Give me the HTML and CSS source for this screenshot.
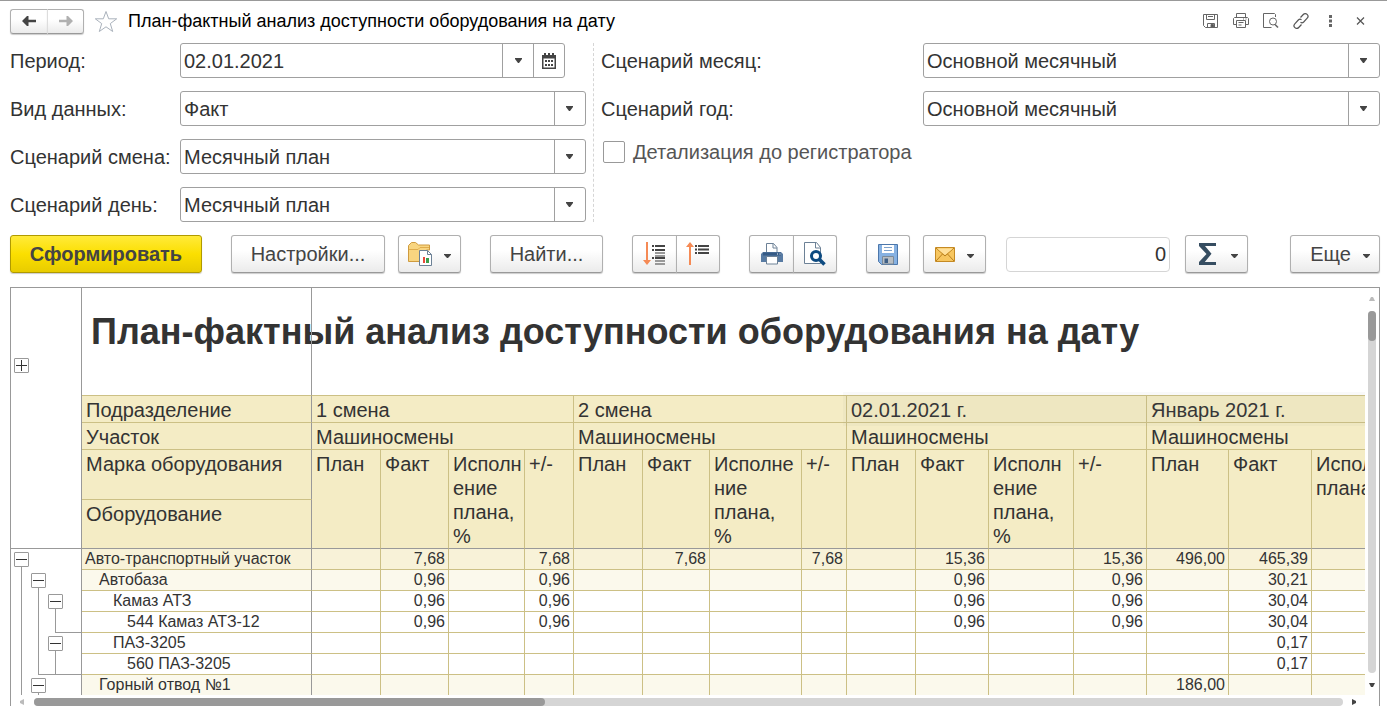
FILE: index.html
```html
<!DOCTYPE html>
<html lang="ru">
<head>
<meta charset="utf-8">
<title>План-фактный анализ доступности оборудования на дату</title>
<link rel="stylesheet" href="styles.css">
</head>
<body>
<svg class="defs" aria-hidden="true">
  <symbol id="caret" viewBox="0 0 7 5" preserveAspectRatio="none"><path d="M0 0h7v1L4 5H3L0 1z" fill="currentColor"/></symbol>
  <symbol id="up" viewBox="0 0 6 4"><path d="M0 4l2-4h2l2 4z" fill="currentColor"/></symbol>
</svg>

<header class="titlebar">
  <div class="group nav">
    <button class="btn" aria-label="Назад"><svg width="14" height="10" viewBox="0 0 14 10"><path d="M0 5l5-5h1.500v3.700H14v2.600H6.500V10H5z" fill="#444"/></svg></button>
    <button class="btn" aria-label="Вперед"><svg width="14" height="10" viewBox="0 0 14 10"><path d="M14 5L9 0H7.500v3.700H0v2.600h7.500V10H9z" fill="#b0b0b0"/></svg></button>
  </div>
  <button class="plain star" aria-label="В избранное"><svg width="24" height="23" viewBox="0 0 24 23"><path d="M12 1.500l2.700 7.300h8l-6.400 4.800 2.400 7.900L12 16.800l-6.700 4.700 2.400-7.900L1.300 8.800h8z" fill="none" stroke="#aab2bc"/></svg></button>
  <h1 class="window-title">План-фактный анализ доступности оборудования на дату</h1>
  <div class="tools">
    <button class="plain" aria-label="Сохранить"><svg width="16" height="16" viewBox="0 0 16 16" fill="none" stroke="#666"><path d="M.5 1.500h14v13H2.500l-2-2zM3.500 1.500v5h8v-5M5 3.500h5M4.500 14v-3.500h7V14"/><path d="M8 11.500h2.500v2.500H8z" fill="#555"/></svg></button>
    <button class="plain" aria-label="Печать"><svg width="16" height="16" viewBox="0 0 16 16" fill="none" stroke="#666"><path d="M3.500 4.500v-4h9v4M3.500 11.500h-3v-6l1-1h13l1 1v6h-3M3.500 7.500h9v7h-9zM5.500 9.500h5M5.500 12h3M10 6h1M12.500 6h1"/></svg></button>
    <button class="plain" aria-label="Просмотр"><svg width="16" height="16" viewBox="0 0 16 16" fill="none" stroke="#666"><path d="M12.500 4V1.500l-1-1H.5v14h8"/><circle cx="10" cy="8.500" r="3.500"/><path d="M12 11.500l3 3" stroke-width="1.600"/></svg></button>
    <button class="plain" aria-label="Ссылка"><svg width="16" height="16" viewBox="0 0 16 16" fill="none" stroke="#555" stroke-width="1.200"><path d="M7.500 4.500l2.800-3a2.600 2.600 0 0 1 3.900 3.700l-3.500 3.800a2.600 2.600 0 0 1-3.200.3M8.500 11.500l-2.800 3a2.600 2.600 0 0 1-3.900-3.700L5.300 7a2.600 2.600 0 0 1 3.200-.3"/></svg></button>
    <button class="plain" aria-label="Меню"><svg width="16" height="16" viewBox="0 0 16 16" fill="#666"><path d="M6 2h3v3H6zM6 6.500h3v3H6zM6 11h3v3H6z"/></svg></button>
    <button class="plain" aria-label="Закрыть"><svg width="16" height="16" viewBox="0 0 16 16"><path d="M4 4.500l7 7M11 4.500l-7 7" stroke="#555" stroke-width="1.200"/></svg></button>
  </div>
</header>

<form class="params">
  <div class="params-left">
    <label for="period">Период:</label>
    <div class="combo date">
      <input id="period" type="text" value="02.01.2021">
      <button type="button" aria-label="Выбрать"><svg class="caret"><use href="#caret"/></svg></button>
      <button type="button" aria-label="Календарь"><svg width="14" height="16" viewBox="0 0 14 16"><path d="M0 2h2V0h2v2h2V0h2v2h2V0h2v2h2v14H0z" fill="#444"/><path d="M1.500 5.500h11v9h-11z" fill="#fff"/><path d="M3 7h2v2H3zM6 7h2v2H6zM9 7h2v2H9zM3 11h2v2H3zM6 11h2v2H6zM9 11h2v2H9z" fill="#444"/></svg></button>
    </div>
    <label for="kind">Вид данных:</label>
    <div class="combo"><select id="kind"><option>Факт</option></select><svg class="caret"><use href="#caret"/></svg></div>
    <label for="shift">Сценарий смена:</label>
    <div class="combo"><select id="shift"><option>Месячный план</option></select><svg class="caret"><use href="#caret"/></svg></div>
    <label for="day">Сценарий день:</label>
    <div class="combo"><select id="day"><option>Месячный план</option></select><svg class="caret"><use href="#caret"/></svg></div>
  </div>
  <div class="params-right">
    <label for="month">Сценарий месяц:</label>
    <div class="combo"><select id="month"><option>Основной месячный</option></select><svg class="caret"><use href="#caret"/></svg></div>
    <label for="year">Сценарий год:</label>
    <div class="combo"><select id="year"><option>Основной месячный</option></select><svg class="caret"><use href="#caret"/></svg></div>
    <label class="check"><input type="checkbox">Детализация до регистратора</label>
  </div>
</form>

<div class="toolbar">
  <button class="btn primary">Сформировать</button>
  <button class="btn wide">Настройки...</button>
  <button class="btn menu near" aria-label="Варианты отчета"><svg width="24" height="24" viewBox="0 0 24 24"><path d="M.5 19.500V3.500l3-3h4l3 2.500h11v5h-3v11.500z" fill="#f8d580" stroke="#cf9b3f"/><path d="M1 7.500h9l2-2h9" fill="none" stroke="#e0ac4c"/><path d="M11.500 8.500h8l4 4v11h-12z" fill="#fff" stroke="#6c8196"/><path d="M19.500 8.500v4h4" fill="none" stroke="#6c8196"/><path d="M15 15h2v6h-2z" fill="#e8483a"/><path d="M18 16h3v5h-3z" fill="#3f9d4a"/></svg><svg class="caret"><use href="#caret"/></svg></button>
  <button class="btn find">Найти...</button>
  <div class="group">
    <button class="btn" aria-label="Развернуть"><svg width="24" height="24" viewBox="0 0 24 24"><path d="M3 0h2v18h3l-4 5-4-5h3z" fill="#f58a55"/><path d="M9 4h2M12 4h10M9 8h2M12 8h10M9 16h2M12 16h10" stroke="#444" stroke-width="2"/><path d="M12 11h10M12 14h10M12 19h10M12 22h10" stroke="#999" stroke-width="2"/></svg></button>
    <button class="btn" aria-label="Свернуть"><svg width="24" height="24" viewBox="0 0 24 24"><path d="M3 23h2V5h3L4 0 0 5h3z" fill="#f58a55"/><path d="M9 4h2M12 4h11M9 7.500h2M12 7.500h11M9 11h2M12 11h11" stroke="#444" stroke-width="2"/></svg></button>
  </div>
  <div class="group">
    <button class="btn" aria-label="Печать"><svg width="22" height="22" viewBox="0 0 22 22"><path d="M5.500 10V.5h7l3.500 4V10" fill="#fff" stroke="#6c8196"/><path d="M12 .5V5h4" fill="none" stroke="#6c8196"/><path d="M0 11l2-2h18l2 2v8H0z" fill="#587ba3"/><path d="M2 9.500h18v3H2z" fill="#355a85"/><path d="M16 11h1M18.500 11h1" stroke="#fff"/><path d="M5.500 13.500h11v7.500h-11z" fill="#fff" stroke="#6c8196"/></svg></button>
    <button class="btn" aria-label="Предварительный просмотр"><svg width="22" height="24" viewBox="0 0 22 24"><path d="M.5.500h12l4 5v16H.5z" fill="#fff" stroke="#6c8196"/><path d="M11.500.500V6h5" fill="none" stroke="#6c8196"/><circle cx="12" cy="14" r="4.500" fill="#fff" stroke="#0d4a80" stroke-width="3"/><path d="M15.500 17.500l5 5" stroke="#0d4a80" stroke-width="3.500"/></svg></button>
  </div>
  <button class="btn icon" aria-label="Сохранить"><svg width="20" height="21" viewBox="0 0 20 21"><path d="M.5.500h19v20h-16l-3-3z" fill="#86b1e2" stroke="#4c77ab"/><path d="M4 1h12v8H4z" fill="#fff"/><path d="M6 3.500h8M6 6.500h8" stroke="#7ea2cc"/><path d="M4.500 20v-7.500h11V20z" fill="#b8bec4" stroke="#7b8a99"/><path d="M6.500 14.500h3.500V19H6.500z" fill="#3e5f86"/></svg></button>
  <button class="btn menu near" aria-label="Отправить"><svg width="20" height="15" viewBox="0 0 20 15"><path d="M.5.500h19v14H.5z" fill="#f7c65f" stroke="#c58a24"/><path d="M1 1l9 8 9-8M1 14l6.500-7M19 14l-6.500-7" fill="none" stroke="#b97e1c"/><path d="M2 1.500h16L10 8z" fill="#ffe09a"/></svg><svg class="caret"><use href="#caret"/></svg></button>
  <input class="sum" type="text" value="0" aria-label="Сумма">
  <button class="btn menu sigma" aria-label="Вид итога"><svg width="18" height="22" viewBox="0 0 18 22"><path d="M0 0h17v3H6l6.500 7.800L5.800 19H17v3H0v-3l7.500-8L0 3z" fill="#364d61"/></svg><svg class="caret"><use href="#caret"/></svg></button>
  <button class="btn more">Еще<svg class="caret"><use href="#caret"/></svg></button>
</div>

<main class="report">
  <div class="sheet">
    <table>
      <colgroup>
        <col class="c-tree"><col class="c-name">
        <col class="w69"><col class="w68"><col class="w76"><col class="w49">
        <col class="w69"><col class="w67"><col class="w92"><col class="w45">
        <col class="w69"><col class="w73"><col class="w85"><col class="w73">
        <col class="w82"><col class="w83"><col>
      </colgroup>
      <thead>
        <tr class="r-title"><td class="tree corner" rowspan="5"><button class="box plus" aria-label="Развернуть"></button></td><td class="name"><h2>План-фактный анализ доступности оборудования на дату</h2></td><td colspan="15"></td></tr>
        <tr class="r-group"><th class="name">Подразделение</th><th colspan="4">1 смена</th><th colspan="4">2 смена</th><th colspan="4" class="shade">02.01.2021 г.</th><th colspan="3">Январь 2021 г.</th></tr>
        <tr class="r-group"><th class="name">Участок</th><th colspan="4">Машиносмены</th><th colspan="4">Машиносмены</th><th colspan="4">Машиносмены</th><th colspan="3">Машиносмены</th></tr>
        <tr class="r-brand"><th class="name">Марка оборудования</th>
          <th rowspan="2">План</th><th rowspan="2">Факт</th><th rowspan="2">Исполн<br>ение<br>плана,<br>%</th><th rowspan="2">+/-</th>
          <th rowspan="2">План</th><th rowspan="2">Факт</th><th rowspan="2">Исполне<br>ние<br>плана,<br>%</th><th rowspan="2">+/-</th>
          <th rowspan="2">План</th><th rowspan="2">Факт</th><th rowspan="2">Исполн<br>ение<br>плана,<br>%</th><th rowspan="2">+/-</th>
          <th rowspan="2">План</th><th rowspan="2">Факт</th><th rowspan="2">Исполнение<br>плана, %</th></tr>
        <tr class="r-unit"><th class="name">Оборудование</th></tr>
      </thead>
      <tbody>
        <tr class="lvl1"><td class="tree"><div><i class="from"><button class="box" aria-label="Свернуть"></button></i></div></td><td class="name">Авто-транспортный участок</td><td></td><td>7,68</td><td></td><td>7,68</td><td></td><td>7,68</td><td></td><td>7,68</td><td></td><td>15,36</td><td></td><td>15,36</td><td>496,00</td><td>465,39</td><td></td></tr>
        <tr class="lvl2"><td class="tree"><div><i class="line"></i><i class="from"><button class="box" aria-label="Свернуть"></button></i></div></td><td class="name">Автобаза</td><td></td><td>0,96</td><td></td><td>0,96</td><td></td><td></td><td></td><td></td><td></td><td>0,96</td><td></td><td>0,96</td><td></td><td>30,21</td><td></td></tr>
        <tr class="lvl3"><td class="tree"><div><i class="line"></i><i class="line"></i><i class="from"><button class="box" aria-label="Свернуть"></button></i></div></td><td class="name">Камаз АТЗ</td><td></td><td>0,96</td><td></td><td>0,96</td><td></td><td></td><td></td><td></td><td></td><td>0,96</td><td></td><td>0,96</td><td></td><td>30,04</td><td></td></tr>
        <tr class="lvl4"><td class="tree"><div><i class="line"></i><i class="line"></i><i class="end last"></i></div></td><td class="name">544 Камаз АТЗ-12</td><td></td><td>0,96</td><td></td><td>0,96</td><td></td><td></td><td></td><td></td><td></td><td>0,96</td><td></td><td>0,96</td><td></td><td>30,04</td><td></td></tr>
        <tr class="lvl3"><td class="tree"><div><i class="line"></i><i class="line"></i><i class="from"><button class="box" aria-label="Свернуть"></button></i></div></td><td class="name">ПАЗ-3205</td><td></td><td></td><td></td><td></td><td></td><td></td><td></td><td></td><td></td><td></td><td></td><td></td><td></td><td>0,17</td><td></td></tr>
        <tr class="lvl4"><td class="tree"><div><i class="line"></i><i class="end"></i><i class="end through last"></i></div></td><td class="name">560 ПАЗ-3205</td><td></td><td></td><td></td><td></td><td></td><td></td><td></td><td></td><td></td><td></td><td></td><td></td><td></td><td>0,17</td><td></td></tr>
        <tr class="lvl2"><td class="tree"><div><i class="line"></i><i class="from"><button class="box" aria-label="Свернуть"></button></i></div></td><td class="name">Горный отвод №1</td><td></td><td></td><td></td><td></td><td></td><td></td><td></td><td></td><td></td><td></td><td></td><td></td><td>186,00</td><td></td><td></td></tr>
      </tbody>
    </table>
  </div>
  <div class="vscroll"><svg class="arr dim"><use href="#up"/></svg><div class="track"><div class="thumb"></div></div><svg class="arr flip"><use href="#up"/></svg></div>
  <div class="hscroll"><svg class="arr left dim"><use href="#up"/></svg><div class="track"><div class="thumb"></div></div><svg class="arr right"><use href="#up"/></svg></div>
</main>
</body>
</html>
```
FILE: styles.css
```css
* { box-sizing: border-box; }

body {
  margin: 0;
  height: 100vh;
  display: flex;
  flex-direction: column;
  overflow: hidden;
  border-top: 1px solid #999;
  background: #fff;
  color: #333;
  font: 20px/24px "Liberation Sans", Arial, sans-serif;
}

button, input, select { font: inherit; color: inherit; }
.defs { position: absolute; width: 0; height: 0; }
.caret { width: 7px; height: 5px; color: #444; }

/* Title bar */
.titlebar {
  flex: none;
  display: flex;
  align-items: center;
  height: 42px;
  padding: 0 18px 2px 10px;
}
.plain {
  display: flex;
  padding: 0;
  border: 0;
  background: none;
}
.star { margin: 0 10px; }
.window-title {
  flex: 1;
  margin: 0;
  color: #000;
  font-size: 18px;
  font-weight: 400;
  line-height: 24px;
}
.tools { display: flex; gap: 14px; }

/* Buttons */
.btn {
  display: flex;
  align-items: center;
  justify-content: center;
  height: 38px;
  padding: 0;
  border: 1px solid #b0b0b0;
  border-bottom-color: #999;
  border-radius: 3px;
  background: linear-gradient(#fff 40%, #ebebeb);
  box-shadow: 0 1px 1px #ccc;
  color: #444;
}
.group { display: flex; }
.group .btn { width: 44px; }
.group .btn:first-child { width: 45px; border-radius: 3px 0 0 3px; }
.group .btn:last-child { margin-left: -1px; border-radius: 0 3px 3px 0; }
.nav .btn { width: 37px; height: 25px; }
.nav .btn:first-child { width: 38px; border-right-color: #ddd; }
.nav .btn:last-child { border-left-color: #ddd; }

/* Report parameters */
.params {
  flex: none;
  display: grid;
  grid-template-columns: 584fr 786fr;
  padding: 0 7px 0 10px;
}
.params-left, .params-right {
  display: grid;
  align-content: start;
  align-items: center;
  row-gap: 13px;
}
.params-left {
  grid-template-columns: 170px 1fr;
  padding-right: 7px;
  border-right: 1px dashed #d5d5d5;
}
.params-right {
  grid-template-columns: 322px 1fr;
  padding-left: 7px;
}
.combo {
  display: grid;
  grid-template-columns: 1fr 31px;
  align-items: center;
  height: 35px;
  border: 1px solid #a0a0a0;
  border-radius: 3px;
}
.combo select {
  grid-area: 1 / 1 / 2 / 3;
  height: 33px;
  padding: 0 3px;
  border: 0;
  background: linear-gradient(#a0a0a0, #a0a0a0) right 30px top / 1px 100% no-repeat;
  appearance: none;
}
.combo > .caret {
  grid-area: 1 / 2;
  justify-self: center;
  pointer-events: none;
}
.combo.date {
  grid-template-columns: 1fr 31px 31px;
  margin-right: 21px;
}
.combo input {
  min-width: 0;
  padding: 0 3px;
  border: 0;
  background: none;
}
.combo button {
  display: flex;
  align-items: center;
  justify-content: center;
  height: 33px;
  padding: 0;
  border: 0;
  border-left: 1px solid #a0a0a0;
  background: none;
}
.check {
  grid-column: 1 / 3;
  display: flex;
  align-items: center;
  gap: 8px;
  color: #555;
}
.check input {
  width: 22px;
  height: 22px;
  margin: 2px 0 2px 2px;
  border: 1px solid #999;
  border-radius: 2px;
  appearance: none;
}

/* Toolbar */
.toolbar {
  flex: none;
  display: flex;
  align-items: center;
  gap: 29px;
  padding: 13px 7px 14px 10px;
}
.primary {
  width: 192px;
  border-color: #b09a00;
  background: linear-gradient(#ffea3a, #fbdf00 50%, #e8cc00);
  font-weight: 700;
}
.wide { width: 154px; }
.find { width: 113px; }
.icon { width: 44px; }
.menu { width: 63px; gap: 12px; }
.near { margin-left: -16px; }
.toolbar .caret { height: 4px; margin-top: 3px; }
.sum {
  width: 164px;
  height: 35px;
  margin-left: -9px;
  padding: 0 3px;
  border: 1px solid #d5d5d5;
  border-radius: 4px;
  text-align: right;
}
.sigma { margin-left: -14px; padding-left: 3px; gap: 14px; }
.more { width: 90px; margin-left: auto; padding-left: 10px; gap: 12px; }

/* Report sheet */
.report {
  flex: 1;
  min-height: 0;
  display: grid;
  grid-template: minmax(0, 1fr) 11px / minmax(0, 1fr) 14px;
  margin: 0 7px 0 10px;
  border: 1px solid #999;
  border-bottom: 0;
}
.sheet { overflow: hidden; isolation: isolate; }
table {
  width: 100%;
  table-layout: fixed;
  border-spacing: 0;
}
.c-tree { width: 71px; }
.c-name { width: 230px; }
.w45 { width: 45px; }
.w49 { width: 49px; }
.w67 { width: 67px; }
.w68 { width: 68px; }
.w69 { width: 69px; }
.w73 { width: 73px; }
.w76 { width: 76px; }
.w82 { width: 82px; }
.w83 { width: 83px; }
.w85 { width: 85px; }
.w92 { width: 92px; }
th, td {
  padding: 0 3px;
  border: 0 solid #ccc085;
  border-width: 0 1px 1px 0;
  white-space: nowrap;
}
th {
  padding: 2px 0 0 4px;
  background: #f4ecc5;
  font-weight: 400;
  line-height: 24px;
  text-align: left;
  vertical-align: top;
}
.name, .tree { border-right-color: #999; }
.r-title { height: 108px; }
.r-title td { vertical-align: top; }
tr > :last-child:not(.name) { border-right-width: 0; }
.r-title .name { padding: 21px 0 0 9px; }
h2 {
  position: relative;
  z-index: -1;
  width: 0;
  margin: 0;
  font-size: 36px;
  line-height: 46px;
}
.r-group { height: 27px; }
.r-brand { height: 50px; }
.r-unit { height: 49px; }
.r-brand th:not(.name), .r-unit th { border-bottom-color: #999; }
.shade { position: relative; }
.shade::after {
  content: "";
  position: absolute;
  top: -4px;
  left: -4px;
  width: 100vw;
  height: 34px;
  background: rgba(128, 128, 128, .05);
}
tbody tr { height: 21px; }
tbody td {
  height: 21px;
  font-size: 16px;
  line-height: 20px;
  text-align: right;
}
tbody .name { text-align: left; }
.lvl1 td { background: #f8f2d8; }
.lvl2 td { background: #fbf9ec; }
.lvl2 .name { padding-left: 17px; }
.lvl3 .name { padding-left: 31px; }
.lvl4 .name { padding-left: 45px; }

/* Grouping tree */
td.tree {
  padding: 0 0 0 3px;
  border-bottom-width: 0;
  background: #fff;
}
.r-title td.corner {
  padding-top: 70px;
  border-bottom: 1px solid #999;
}
.tree div { display: flex; height: 21px; }
.tree i {
  width: 17px;
  padding-top: 3px;
  background: linear-gradient(#999, #999) 7px 0 / 1px 100% no-repeat;
}
.tree .from { background-position: 7px 15px; }
.tree .end {
  background-image: linear-gradient(#999, #999), linear-gradient(#999, #999);
  background-position: 7px 0, 7px 20px;
  background-size: 1px 100%, 100% 1px;
}
.tree .through { background-position: 7px 0, 0 20px; }
.tree .last { flex: 1; }
.box {
  display: block;
  width: 15px;
  height: 15px;
  padding: 0;
  border: 1px solid #999;
  border-radius: 1px;
  background: linear-gradient(#333, #333) center / 11px 1px no-repeat #fff;
}
.plus {
  background:
    linear-gradient(#333, #333) center / 11px 1px no-repeat,
    linear-gradient(#333, #333) center / 1px 11px no-repeat,
    #fff;
}

/* Scroll bars */
.vscroll, .hscroll { display: flex; align-items: center; }
.vscroll { flex-direction: column; padding: 9px 0 8px; }
.arr { flex: none; width: 6px; height: 4px; color: #444; }
.dim { color: #bbb; }
.flip { transform: rotate(180deg); }
.left { transform: rotate(-90deg); }
.right { transform: rotate(90deg); }
.track { flex: 1; border-radius: 4px; background: #d5d5d5; }
.thumb { border-radius: 4px; background: #999; }
.vscroll .track { width: 8px; margin: 10px 0; }
.vscroll .thumb { height: 30px; }
.hscroll { padding: 3px 8px 0; }
.hscroll .track { height: 8px; margin: 0 8px 0 9px; }
.hscroll .thumb { width: 39%; height: 8px; }
```
